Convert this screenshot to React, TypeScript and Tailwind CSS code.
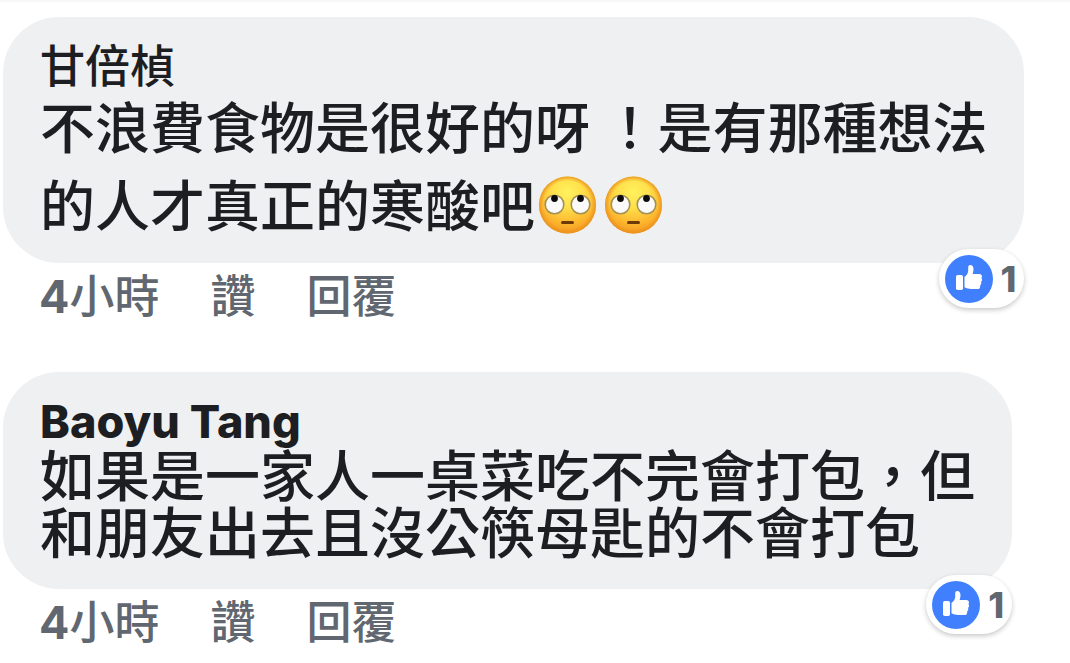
import type { ReactNode } from 'react';

interface CommentProps {
  author: string;
  hours: number;
  likes: number;
  nameClass: string;
  bodyClass: string;
  children: ReactNode;
}

function ThumbIcon() {
  return (
    <svg className="h-12 w-12" viewBox="0 0 48 48" aria-hidden="true">
      <circle cx="24" cy="24" r="24" fill="#4080ff" />
      <rect x="11" y="20" width="7" height="15" rx="1.8" fill="#fff" />
      <path
        d="M19.5 22c2-1.500 3.500-3.500 3.700-6V12.500c0-1.700.9-2.500 2.100-2.500 2.200 0 3.200 1.900 3.200 4.200 0 1.700-.4 3.300-.9 4.800h6.800c1.500 0 2.600 1 2.600 2.300 0 .8-.2 1.300-.6 1.800.5.500.8 1.200.7 2-.1.800-.5 1.400-1.100 1.800.3.500.4 1.100.3 1.700-.1.800-.6 1.500-1.200 1.800.1.300.1.700.1 1 0 1.600-1.200 2.600-2.800 2.600h-6.200c-2.500 0-4.700-.5-6.700-1.700z"
        fill="#fff"
      />
    </svg>
  );
}

function RollingEyes({ id }: { id: string }) {
  return (
    <svg
      className="inline-block h-[58px] w-[66px] align-[-8px]"
      viewBox="0 0 66 58"
      role="img"
      aria-label="🙄"
    >
      <defs>
        <radialGradient id={`${id}-face`} cx="0.5" cy="0.28" r="0.75">
          <stop offset="0" stopColor="#fff25e" />
          <stop offset="0.35" stopColor="#ffe04b" />
          <stop offset="0.7" stopColor="#fdb930" />
          <stop offset="1" stopColor="#f3931c" />
        </radialGradient>
        <radialGradient id={`${id}-rim`} cx="0.5" cy="0.5" r="0.5">
          <stop offset="0.84" stopColor="#e8921f" stopOpacity="0" />
          <stop offset="1" stopColor="#e8921f" stopOpacity="0.85" />
        </radialGradient>
      </defs>
      <circle cx="32.5" cy="29" r="28.5" fill={`url(#${id}-face)`} />
      <circle cx="32.5" cy="29" r="28.5" fill={`url(#${id}-rim)`} />
      <g fill="#fafafa" stroke="#a39255" strokeWidth="1.6">
        <circle cx="19.5" cy="28.5" r="9.3" />
        <circle cx="45.5" cy="28.5" r="9.3" />
      </g>
      <circle cx="19.5" cy="22.5" r="3.4" fill="#0c0a0a" />
      <circle cx="45.5" cy="22.5" r="3.4" fill="#0c0a0a" />
      <rect x="26" y="45" width="13" height="3" rx="1.5" fill="#6b3a08" />
    </svg>
  );
}

function Comment({ author, hours, likes, nameClass, bodyClass, children }: CommentProps) {
  return (
    <article>
      <div className="relative w-fit rounded-[56px] bg-[#eff0f2] px-[37px] pt-8 text-[#1d1e22]">
        <h3 className={`text-[45px] leading-9 ${nameClass}`}>{author}</h3>
        <p className={`font-['Noto_Sans_CJK_TC',sans-serif] text-[55px] font-medium ${bodyClass}`}>
          {children}
        </p>
        <button
          type="button"
          aria-label={`讚 ${likes}`}
          className="absolute right-0 -bottom-[45px] flex h-[59px] items-center gap-2 rounded-full bg-white pr-2 pl-1.5 text-4xl font-extrabold text-[#5f676f] shadow-[0_2px_5px_rgba(0,0,0,0.22)]"
        >
          <ThumbIcon />
          {likes}
        </button>
      </div>
      <div className="flex h-[68px] items-center gap-[51px] pl-9 text-[45px] leading-[68px] font-medium text-[#616770]">
        <a href="#">
          <span className="font-bold">{hours}</span>小時
        </a>
        <button type="button">讚</button>
        <button type="button">回覆</button>
      </div>
    </article>
  );
}

export default function App() {
  return (
    <main
      lang="zh-Hant-TW"
      className="flex min-h-screen flex-col gap-[41px] border-t-2 border-[#f8f8f8] bg-white px-[3px] pt-[15px] font-['Inter','Noto_Sans_CJK_TC',sans-serif]"
    >
      <Comment
        author="甘倍楨"
        hours={4}
        likes={1}
        nameClass="font-medium"
        bodyClass="leading-[78px] pb-[22px]"
      >
        不浪費食物是很好的呀 ！是有那種想法
        <br />
        的人才真正的寒酸吧
        <RollingEyes id="eyes-a" />
        <RollingEyes id="eyes-b" />
      </Comment>
      <Comment
        author="Baoyu Tang"
        hours={4}
        likes={1}
        nameClass="font-extrabold"
        bodyClass="mt-1 leading-[57px] pb-[31px]"
      >
        如果是一家人一桌菜吃不完會打包，但
        <br />
        和朋友出去且沒公筷母匙的不會打包
      </Comment>
    </main>
  );
}
